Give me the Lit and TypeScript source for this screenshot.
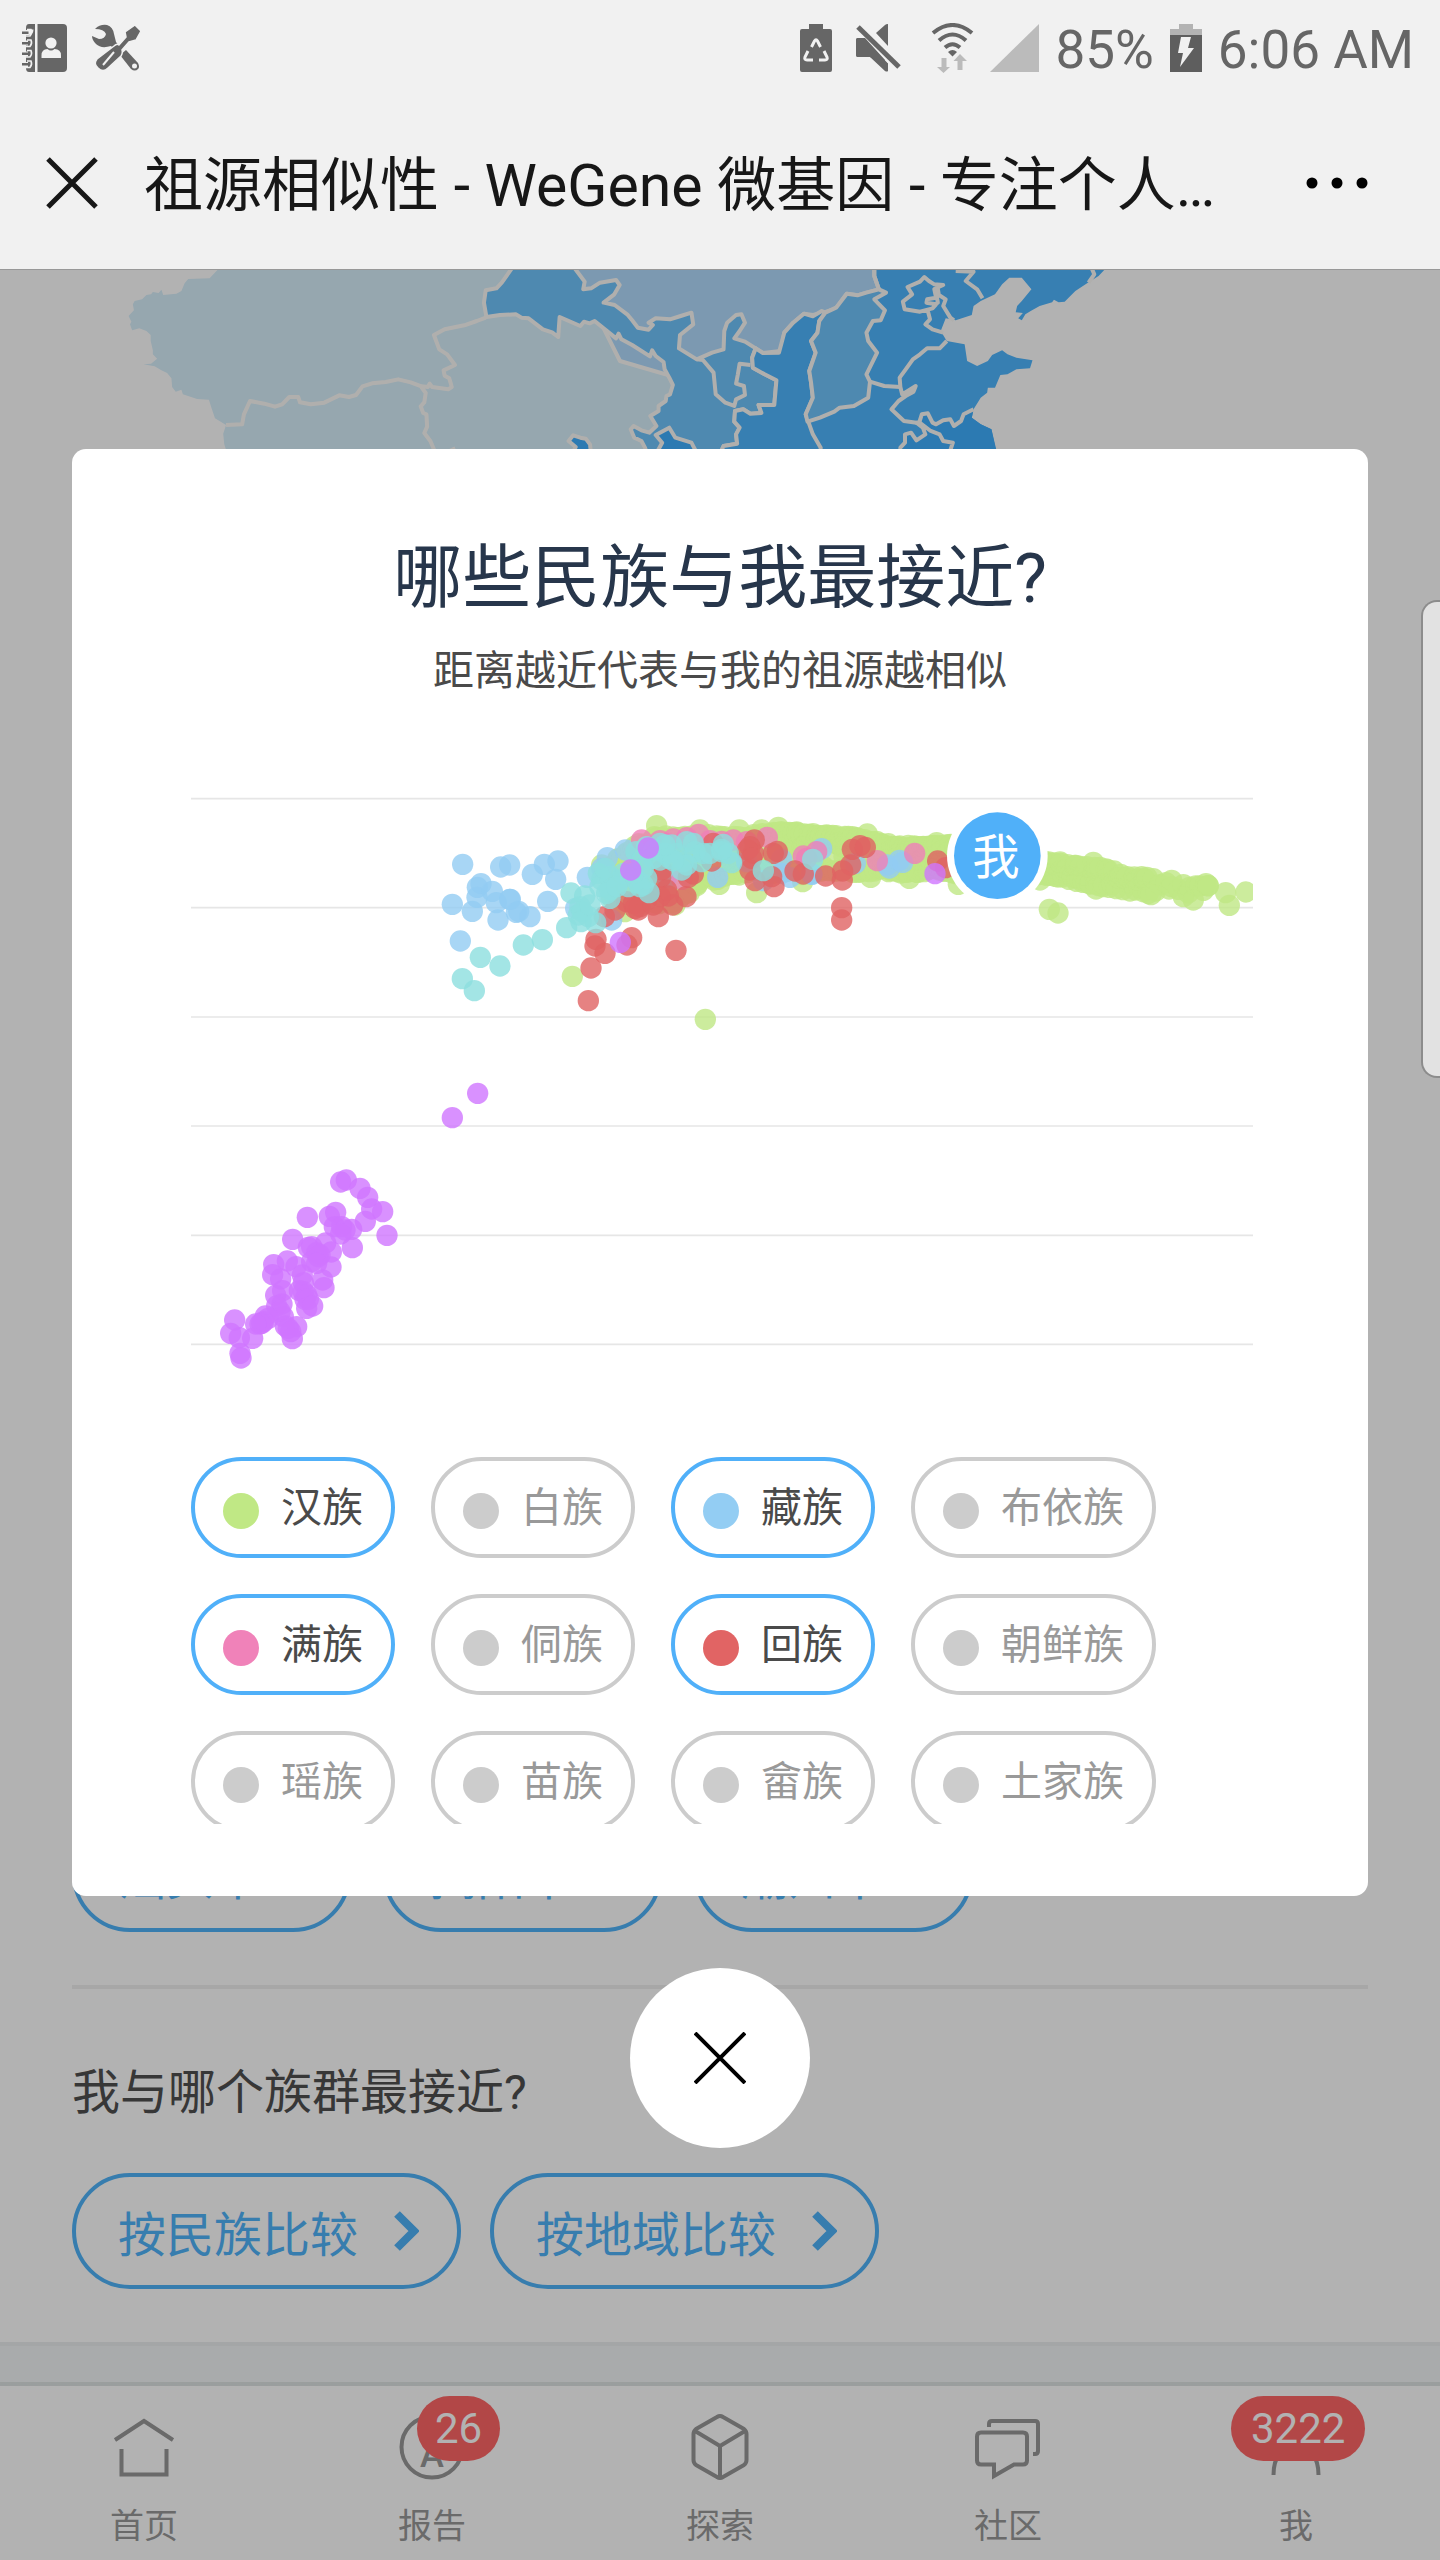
import { LitElement, html, svg, css } from "lit";
import { customElement, state } from "lit/decorators.js";
import { classMap } from "lit/directives/class-map.js";

type Point = [number, number];
interface Cluster {
  origin: Point;
  points: Point[];
}
interface Series {
  color: string;
  clusters: Cluster[];
}
interface Group {
  name: string;
  color: string;
  active: boolean;
}

/* Cluster origins inside the 3186 x 1860 plot area. */
const LEFT: Point = [687, 90];
const RIGHT: Point = [1827, 90];
const LOW: Point = [-33, 900];

/* x, upper y and lower y of the dense Han band. */
const BAND: [number, number, number][] = [
  [570, 230, 330], [620, 180, 350], [700, 138, 345], [780, 134, 335], [840, 132, 280],
  [930, 140, 260], [1000, 134, 250], [1060, 124, 250], [1140, 124, 255], [1260, 136, 248],
  [1310, 138, 248], [1390, 158, 244], [1460, 170, 254], [1540, 162, 242], [1590, 162, 250],
  [1700, 190, 262], [1800, 197, 255], [1900, 218, 258], [2000, 228, 282], [2060, 234, 292],
  [2120, 256, 302], [2190, 262, 313], [2230, 276, 296], [2330, 288, 315], [2370, 284, 292],
];

function bandPoints(): Point[] {
  const out: Point[] = [];
  let seed = 17;
  const rand = () => {
    seed = (seed * 16807) % 2147483647;
    return seed / 2147483647;
  };
  for (let i = 0; i < BAND.length - 1; i++) {
    const [x0, t0, b0] = BAND[i];
    const [x1, t1, b1] = BAND[i + 1];
    const n = Math.round((x1 - x0) / (x0 < 1900 ? 3 : x0 < 2190 ? 5 : 12));
    for (let k = 0; k < n; k++) {
      const f = (k + rand()) / n;
      const top = t0 + (t1 - t0) * f;
      const bottom = b0 + (b1 - b0) * f;
      const v = k % 4 === 0 ? rand() * 0.08 : k % 4 === 1 ? 1 - rand() * 0.12 : rand();
      out.push([Math.round(x0 + (x1 - x0) * f), Math.round(top + (bottom - top) * v)]);
    }
  }
  return out;
}

const SERIES: Series[] = [
  {
    color: "#bfe784",
    clusters: [
      { origin: LEFT, points: bandPoints() },
      {
        origin: LEFT,
        points: [
          [710, 107], [958, 120], [1025, 120], [1075, 112], [840, 120], [545, 225], [457, 559], [856, 688],
          [615, 365], [1010, 308], [898, 283], [830, 287], [1148, 275], [765, 345],
        ],
      },
      {
        origin: RIGHT,
        points: [
          [202, 132], [325, 166], [410, 158], [212, 262], [328, 265], [475, 283], [720, 270], [748, 358],
          [774, 369], [780, 216], [828, 226], [880, 217], [888, 297], [1053, 314], [1115, 271], [1180, 330],
          [1218, 281], [1225, 287], [1277, 308], [1288, 346], [1338, 306], [1150, 320],
        ],
      },
    ],
  },
  {
    color: "#92ccf3",
    clusters: [
      {
        origin: LEFT,
        points: [
          [128, 223], [242, 231], [269, 225], [337, 253], [373, 223], [414, 213], [407, 268], [183, 281],
          [172, 292], [171, 322], [217, 304], [229, 338], [269, 328], [271, 328], [157, 364], [97, 343],
          [234, 390], [296, 364], [289, 367], [330, 380], [383, 334], [121, 453], [502, 262], [562, 203],
          [545, 235], [616, 180], [467, 355], [575, 390], [893, 262], [1205, 176], [1085, 208], [1085, 250],
          [1110, 262], [1030, 272], [1175, 252], [740, 262], [980, 215],
        ],
      },
      { origin: RIGHT, points: [[262, 225], [268, 234], [298, 211], [308, 217], [166, 220], [36, 253]] },
    ],
  },
  {
    color: "#ef80b8",
    clusters: [
      {
        origin: LEFT,
        points: [
          [665, 150], [720, 152], [760, 147], [800, 143], [836, 133], [740, 160], [870, 152], [905, 154],
          [940, 150], [980, 155], [1042, 142], [785, 268], [1150, 198], [1160, 205], [1190, 185],
        ],
      },
      { origin: RIGHT, points: [[232, 212], [344, 190]] },
    ],
  },
  {
    color: "#e06363",
    clusters: [
      {
        origin: LEFT,
        points: [
          [1003, 150], [990, 170], [1000, 190], [982, 180], [995, 205], [1060, 190], [1072, 184], [990, 240],
          [1005, 272], [1055, 260], [1062, 290], [1125, 243], [1150, 252], [1217, 258], [880, 160], [875, 213],
          [820, 252], [805, 262], [798, 320], [725, 240], [722, 262], [740, 300], [758, 345], [745, 318],
          [715, 380], [720, 320], [690, 310], [680, 330], [655, 360], [640, 340], [620, 335], [660, 350],
          [645, 355], [585, 360], [553, 380], [528, 448], [525, 468], [555, 490], [513, 534], [505, 632],
          [621, 465], [635, 443], [768, 481], [700, 345],
        ],
      },
      {
        origin: RIGHT,
        points: [
          [157, 178], [180, 167], [196, 172], [152, 225], [128, 243], [127, 270], [125, 353],
          [125, 390], [413, 213], [437, 233],
        ],
      },
    ],
  },
  {
    color: "#8cdfde",
    clusters: [
      {
        origin: LEFT,
        points: [
          [181, 502], [240, 528], [310, 465], [367, 449], [127, 566], [163, 602], [440, 413], [453, 309],
          [494, 318], [480, 350], [475, 375], [487, 365], [505, 380], [483, 395], [527, 398], [510, 345],
          [535, 250], [545, 270], [540, 290], [570, 260], [570, 300], [570, 325], [560, 310], [600, 270],
          [610, 250], [625, 290], [650, 270], [680, 265], [670, 285], [687, 308], [660, 290], [648, 185],
          [680, 170], [720, 160], [700, 180], [735, 190], [720, 210], [755, 165], [750, 205], [770, 190],
          [790, 215], [785, 240], [800, 155], [820, 160], [825, 185], [845, 215], [850, 190], [870, 190],
          [905, 185], [910, 163], [925, 190], [935, 218], [905, 178], [700, 205], [665, 210], [670, 235],
          [1030, 242], [1178, 208], [590, 290], [640, 250], [555, 235], [800, 225], [760, 212], [735, 165],
        ],
      },
    ],
  },
  {
    color: "#cf75ff",
    clusters: [
      { origin: LEFT, points: [[685, 174], [632, 240], [601, 457]] },
      { origin: RIGHT, points: [[405, 251]] },
      {
        origin: LOW,
        points: [
          [893, 100], [817, 173], [482, 366], [499, 360], [540, 385], [563, 412], [575, 447], [608, 455],
          [556, 484], [621, 526], [467, 457], [448, 469], [382, 472], [463, 500], [485, 500], [495, 510],
          [515, 508], [482, 522], [517, 563], [338, 538], [437, 549], [454, 576], [385, 562], [395, 560],
          [410, 578], [415, 590], [420, 585], [395, 605], [410, 610], [453, 621], [322, 603], [281, 614],
          [278, 644], [302, 657], [348, 620], [367, 645], [370, 668], [428, 660], [432, 683], [358, 692],
          [370, 695], [380, 705], [375, 718], [385, 718], [380, 745], [398, 738], [308, 692], [287, 706],
          [306, 732], [290, 738], [300, 755], [310, 770], [256, 768], [265, 775], [250, 785], [245, 790],
          [240, 792], [227, 792], [218, 835], [164, 780], [152, 820], [178, 833], [180, 880], [183, 894],
          [316, 798], [350, 800], [325, 805], [332, 815], [337, 836],
        ],
      },
    ],
  },
];

const GRID_LINES = [116, 443, 771, 1098, 1426, 1753];

@customElement("status-bar")
export class StatusBar extends LitElement {
  static styles = css`
    :host {
      display: flex;
      align-items: center;
      justify-content: space-between;
      height: 96px;
      padding: 0 26px 0 22px;
      color: #666;
      font-family: Roboto, "Liberation Sans", sans-serif;
      font-size: 53px;
      line-height: 60px;
      white-space: nowrap;
    }
    .group {
      display: flex;
      align-items: center;
      gap: 16px;
    }
    .apps {
      gap: 25px;
    }
    .group span {
      padding-top: 4px;
    }
    svg {
      display: block;
      fill: currentColor;
    }
  `;

  render() {
    return html`
      <div class="group apps">
        <svg width="45" height="50" viewBox="0 0 45 50">
          <path d="M7 1h6v48H7q-3 0-3-4V5q0-4 3-4z" />
          <path d="M15.500 1H41q4 0 4 4v40q0 4-4 4H15.500z" />
          <g fill="none" stroke="#f1f1f1" stroke-width="5">
            <path d="M0 9.500h6q3 0 3-3M0 20h6M0 31h6M0 41.500h6" />
          </g>
          <g fill="none" stroke="#f1f1f1" stroke-width="1.600">
            <path d="M5 6.500h4q1.500 3.500-1 6.500h-4M5 17h4q1.500 3.500-1 6.500h-4M5 27.500h4q1.500 3.500-1 6.500h-4M5 38h4q1.500 3.500-1 6.500h-4" />
          </g>
          <path d="M0 8.500h6.500v2.500H0zM0 19h6.500v2.500H0zM0 29.500h6.500v2.500H0zM0 40h6.500v2.500H0z" />
          <ellipse cx="29" cy="20" rx="5.600" ry="5.600" fill="#f1f1f1" />
          <path d="M19.500 35v-2.500q0-6.500 6-6.500 3.500 3 7 0 6.500 0 6.500 6.500V35z" fill="#f1f1f1" />
        </svg>
        <svg width="50" height="48" viewBox="0 0 50 48">
          <path d="M3 5Q8 0 15 1q6 2 7 9l2 8 3 4-4 4-4-4q-10 3-15-2-4-4-4-8l7 3q6 0 7-5-2-5-11-5z" />
          <path d="M28 31l6-5 12 13q2 4 0 6-3 3-7 0z" />
          <circle cx="42.500" cy="42" r="2.500" fill="#f1f1f1" />
          <path d="M43 1l6 6-5 9-7 2-7 8q1 3-1 6L16 44q-5 5-10 0-5-4-1-9L22 22q3-3 5-1l7-8-1-5z" stroke="#f1f1f1" stroke-width="1.500" />
          <path d="M11 41L22 28" stroke="#f1f1f1" stroke-width="2" fill="none" />
        </svg>
      </div>
      <div class="group">
        <svg width="40" height="48" viewBox="0 0 40 48">
          <path d="M9 0h14v5h7q2 0 2 2v39q0 2-2 2H2q-2 0-2-2V7q0-2 2-2h7z" />
          <g fill="none" stroke="#f1f1f1" stroke-width="3">
            <path d="M11.500 23l3-6q1.500-2.500 3 0l3 6M24 27l3 6q1 3-2 3h-6M13 36H7q-3 0-2-3l3-6" />
          </g>
          <path d="M16 21l7 6h-4l5 5h-6v5h-4v-5H8l5-5H9z" />
        </svg>
        <svg width="59" height="48" viewBox="0 0 59 48">
          <path d="M32 0v22L20 9 29 1q1-1 3-1z" />
          <path d="M2 14h7l23 25v8q-1 1-3 0L14 33H2q-2 0-2-2V16q0-2 2-2z" />
          <path d="M2 3L42 43" stroke="#f1f1f1" stroke-width="9" />
          <path d="M2 14h7l20 22v4L14 33H2q-2 0-2-2V16q0-2 2-2z" />
          <path d="M2 3L43 43" stroke="currentColor" stroke-width="5" />
        </svg>
        <svg width="43" height="50" viewBox="0 0 43 50">
          <g fill="none" stroke="currentColor" stroke-width="4">
            <path d="M2 10q19.500-16 39 0M8 17.500q13.500-12 27 0M14 24.500q7.500-6.500 15 0" />
          </g>
          <path d="M17 29q4.500-4 9 0l-4.500 4.500z" />
          <path d="M10.500 35h5v9h3.500l-6.500 6-6.500-6h4.500zM26.500 47h5v-9h4.500l-7-7-6.500 7h4z" fill="#bbb" />
        </svg>
        <svg width="49" height="48" viewBox="0 0 49 48"><path d="M49 0v48H0z" fill="#bbb" /></svg>
        <span>85%</span>
        <svg width="32" height="48" viewBox="0 0 32 48">
          <path d="M9 0h14v5h9v6H0V5h9z" fill="#b3b3b3" />
          <path d="M0 11h32v37H0z" fill="#5e5e5e" />
          <path d="M11 13h10l-3 11h6L10 43l3-14H8z" fill="#f1f1f1" />
        </svg>
        <span>6:06 AM</span>
      </div>
    `;
  }
}

@customElement("china-map")
export class ChinaMap extends LitElement {
  static styles = css`
    :host {
      display: block;
    }
    svg {
      display: block;
      width: 100%;
    }
    path {
      stroke: #fdfbf8;
      stroke-width: 4px;
      stroke-linejoin: round;
      vector-effect: non-scaling-stroke;
    }
    .line {
      fill: none;
    }
    .coast {
      stroke: none;
    }
    .pale {
      fill: #d7effb;
    }
    .soft {
      fill: #b2dcfe;
    }
    .mid {
      fill: #70c4fd;
    }
    .strong {
      fill: #4fb7ff;
    }
    .deep {
      fill: #40afff;
    }
  `;

  render() {
    return html`
      <svg viewBox="0 0 1440 184" role="img" aria-label="祖源分布地图">
        <g transform="translate(100 -9) scale(0.35714 0.33333)">
          <path class="coast pale" d="M335 20L307 52 247 54 237 67 228 90 214 98 177 102 172 86 164 96 148 93 143 100 130 102 118 115 97 120 92 130 95 148 80 165 88 182 84 190 90 208 110 202 130 210 142 222 142 240 148 268 148 280 160 293 143 308 122 310 153 316 172 328 188 336 200 352 202 378 212 392 228 386 232 400 272 414 305 416 312 440 322 472 353 492 345 518 348 550 360 590H1620V20z" />
          <path class="line" d="M1080 170L1055 180 1020 193 965 205 935 222 950 265 972 280 994 312 962 328 965 344 978 352 985 378 975 385 930 378 923 368 918 378 900 376 870 364 835 355 800 363 762 367 735 376 717 402 697 408 670 403 628 425 590 430 560 424 555 408 530 408 510 430 490 437 460 428 420 420 403 460 398 490 353 492" />
          <path class="line" d="M900 378L912 396 908 424 898 436 905 456 914 460 916 497 908 516 925 540 945 590M970 575L995 562" />
          <path class="deep" d="M1312 540L1325 523 1345 530 1360 533 1372 550 1376 590H1315L1332 558z" />
        </g>
        <g transform="translate(620 -9) scale(0.35714 0.33333)">
          <path class="coast strong" d="M700 20H1362L1340 45 1310 65 1275 90 1245 122 1228 124 1215 116 1210 124 1175 135 1150 150 1135 160 1125 178 1115 172 1128 156 1108 154 1112 135 1125 120 1152 85 1125 50 1090 50 1070 70 1050 100 1010 120 990 135 985 162 940 178 912 172 898 210 915 240 965 250 972 300 1000 315 1030 300 1042 282 1070 268 1085 280 1110 290 1155 298 1148 322 1110 325 1085 340 1065 342 1050 380 1030 380 1028 395 1010 410 990 445 985 470 1010 490 1040 505 1057 590H200V200L565 150z" />
          <path class="soft" d="M-140 0H712V45L725 85 690 95 665 103 635 98 605 142 570 155 540 162 515 158 485 185 460 215 450 270 400 276 380 262 320 400 0 300z" />
          <path class="mid" d="M-295 10L-331 65-346 82-376 88-381 125-374 168-336 162-291 160-276 170-256 172-216 205-190 214-173 228-169 168-111 195-101 182-85 187-71 180-11 232-4 218 4 235 34 252 84 286 90 268 100 285 122 303 125 325 138 350 148 372 140 400 130 405 128 420 108 435 108 450 85 465 102 495 82 515 60 508 38 495 30 505 40 530 60 540 70 560 80 590H275L290 555 328 548 325 520 335 500 320 482 322 450 345 445 365 458 396 456 388 432 432 432 438 358 405 340 372 320 370 290 380 262 350 242 320 232 335 210 350 185 340 160 325 162 300 185 292 210 290 265 258 275 215 295 165 262 168 222 205 190 200 155 170 165 140 175 100 172 80 185 92 192 80 206 50 200 34 178 20 160-15 132-46 125-16 100-1 72-11 57-56 65-81 82-103 85-99 62-135 10z" />
          <path class="line" d="M215 295L232 297 262 335 268 400 295 425 320 435 325 415 350 402 347 375 325 368 330 340 335 308 365 312" />
          <path class="strong" d="M575 155L558 180 553 215 535 240 548 275 530 330 535 365 540 410 520 460 540 520 562 560 560 590H275L290 555 328 548 325 520 335 500 320 482 322 450 345 445 365 458 396 456 388 432 432 432 438 358 405 340 372 320 370 290 380 262 400 276 445 275 460 215 485 185 515 158 540 166 565 150z" />
          <path class="mid" d="M575 155L605 140 635 98 665 103 690 95 725 85 745 95 712 115 742 148 730 178 708 180 690 215 695 240 720 275 690 340 700 362 695 410 655 435 615 440 600 452 560 470 525 482 520 460 540 410 535 365 530 330 548 275 535 240 553 215 558 180z" />
          <path class="line" d="M700 362L740 375 785 378M712 20V45L725 85" />
          <path class="line" d="M852 48L840 62 805 78 818 100 792 122 797 145 840 152 875 142 885 130 858 125 860 115 885 110 880 84 905 72 880 70 865 60zM885 95L890 125 876 135M890 84L893 102 912 115 905 135 925 170 935 178M862 150L868 175 855 190 875 205 905 215" />
          <path class="line" d="M940 30L990 32 968 60 1000 85 1015 112M1320 20L1328 40 1312 65" />
          <path class="line" d="M915 240L895 262 860 262 840 280 820 295 800 325 783 350 785 378 790 400 828 375 822 392 800 405 780 420 760 445 795 480 830 485" />
          <path class="coast deep" d="M838 484L845 460 862 457 875 485 885 490 905 478 925 475 935 495 955 480 962 460 990 445 985 470 1010 490 1040 505 1059 590H918L932 545 905 540 900 520 860 505z" />
          <path class="line" d="M838 484L845 460 862 457 875 485 885 490 905 478 925 475 935 495 955 480 962 460 990 445" />
          <path class="deep" d="M830 485L848 500 855 520 830 538 815 515 798 520 798 545 785 560V590H918L932 545 905 540 895 520 870 510 838 484z" />
          <path class="deep" d="M95 590L118 545 100 522 138 500 155 530 200 545 222 590z" />
        </g>
      </svg>
    `;
  }
}

@customElement("report-page")
export class ReportPage extends LitElement {
  static styles = css`
    :host {
      flex: 1;
      display: flex;
      flex-direction: column;
      justify-content: space-between;
      background: #fff;
      color: #505050;
      font-size: 48px;
      line-height: 72px;
      border-top: 1px solid #dadada;
    }
    .content {
      padding: 0 72px;
    }
    .row {
      display: flex;
      gap: 29px;
    }
    .cities {
      gap: 32px;
      padding-bottom: 53px;
      border-bottom: 4px solid #f0f0f0;
    }
    .pill {
      display: flex;
      align-items: center;
      height: 116px;
      padding: 0 38px 0 42px;
      gap: 36px;
      border: 4px solid #50b3fa;
      border-radius: 58px;
      background: none;
      color: #50b3fa;
      font: inherit;
      white-space: nowrap;
    }
    .city {
      gap: 20px;
      padding-right: 40px;
    }
    .pill span {
      padding-top: 10px;
    }
    .pill svg {
      display: block;
      fill: none;
      stroke: currentColor;
      stroke-width: 8;
    }
    h2 {
      margin: 0;
      padding: 68px 0 44px;
      font-size: 48px;
      font-weight: 400;
      line-height: 72px;
    }
    .band {
      height: 36px;
      margin-top: 53px;
      border-top: 4px solid #ebeef0;
      background: #f3f5f7;
    }
  `;

  private pill(text: string, extra = "") {
    return html`<button class="pill ${extra}" type="button">
      <span>${text}</span>
      <svg width="25" height="40" viewBox="0 0 25 40"><path d="M3 3L20 20 3 37" /></svg>
    </button>`;
  }

  render() {
    return html`
      <china-map></china-map>
      <div>
        <div class="content">
          <div class="row cities">
            ${["汕头市", "揭阳市", "潮州市"].map((city) => this.pill(city, "city"))}
          </div>
          <h2>我与哪个族群最接近?</h2>
          <div class="row">${this.pill("按民族比较")}${this.pill("按地域比较")}</div>
        </div>
        <div class="band"></div>
      </div>
    `;
  }
}

@customElement("tab-bar")
export class TabBar extends LitElement {
  static styles = css`
    :host {
      display: flex;
      height: 174px;
      border-top: 4px solid #dde2e2;
      background: #fff;
    }
    .tab {
      position: relative;
      flex: 1;
      display: flex;
      flex-direction: column;
      align-items: center;
      gap: 20px;
      padding-top: 26px;
      color: #989898;
      font-size: 34px;
      line-height: 48px;
      text-decoration: none;
    }
    svg {
      display: block;
      fill: none;
      stroke: currentColor;
      stroke-width: 4;
    }
    .letter {
      fill: currentColor;
      stroke: none;
      font: 500 36px Roboto, "Liberation Sans", sans-serif;
    }
    .badge {
      position: absolute;
      top: 10px;
      left: calc(50% - 15px);
      padding: 0 18px;
      border-radius: 33px;
      background: #ff6666;
      color: #fff;
      font-size: 42px;
      line-height: 65px;
    }
    .wide {
      left: calc(50% - 65px);
      padding: 0 20px;
    }
  `;

  render() {
    const tabs = [
      { label: "首页", icon: svg`<path d="M7 28L36 9 65 28M13.500 37V62.500H58.500V37" />` },
      {
        label: "报告",
        icon: svg`<circle cx="36" cy="35" r="30.500" /><text class="letter" x="36" y="55" text-anchor="middle">A</text>`,
        badge: "26",
      },
      {
        label: "探索",
        icon: svg`<path stroke-linejoin="round" d="M33 5Q36 3 39 5L60 17Q62.500 19 62.500 22V48Q62.500 51 60 53L39 65Q36 67 33 65L12 53Q9.500 51 9.500 48V22Q9.500 19 12 17zM11 19L36 34 61 19M36 34V66" />`,
      },
      {
        label: "社区",
        icon: svg`<path d="M17 15V12Q17 9 20 9H63Q66 9 66 12V39Q66 42 63 42H61M9 20.500H51Q55 20.500 55 24.500V48.500Q55 52.500 51 52.500H42L22 64V52.500H9Q5 52.500 5 48.500V24.500Q5 20.500 9 20.500z" />`,
      },
      {
        label: "我",
        icon: svg`<circle cx="36" cy="20" r="14" /><path d="M13.500 63Q13.500 36 36 36T58.500 63" />`,
        badge: "3222",
        wide: true,
      },
    ];
    return tabs.map(
      (tab) => html`<a class="tab" href="#">
        <svg width="72" height="70" viewBox="0 0 72 70" aria-hidden="true">${tab.icon}</svg>
        <span>${tab.label}</span>
        ${tab.badge
          ? html`<span class=${classMap({ badge: true, wide: !!tab.wide })}>${tab.badge}</span>`
          : null}
      </a>`,
    );
  }
}

@customElement("similarity-chart")
export class SimilarityChart extends LitElement {
  static styles = css`
    :host {
      display: block;
    }
    svg {
      display: block;
      width: 100%;
    }
    .grid {
      stroke: #e6e6e6;
      stroke-width: 5px;
    }
    .dots {
      fill-opacity: 0.8;
    }
    .halo {
      fill: #fff;
    }
    .me {
      fill: #50b0f9;
    }
    .me-label {
      fill: #fff;
      font-size: 142px;
      text-anchor: middle;
    }
  `;

  render() {
    return html`
      <svg viewBox="0 0 3186 1860" role="img" aria-label="民族祖源散点图">
        ${GRID_LINES.map((y) => svg`<line class="grid" x1="0" x2="3186" y1=${y} y2=${y} />`)}
        ${SERIES.map(
          (series) => svg`<g class="dots" fill=${series.color}>
            ${series.clusters.map((c) =>
              c.points.map(([x, y]) => svg`<circle cx=${x + c.origin[0]} cy=${y + c.origin[1]} r="32" />`),
            )}
          </g>`,
        )}
        <circle class="halo" cx="2419" cy="287" r="151" />
        <circle class="me" cx="2419" cy="287" r="130" />
        <text class="me-label" x="2415" y="342">我</text>
      </svg>
    `;
  }
}

@customElement("similarity-dialog")
export class SimilarityDialog extends LitElement {
  static styles = css`
    :host {
      display: flex;
      flex-direction: column;
      align-items: center;
      padding: 180px 72px 0;
    }
    .card {
      box-sizing: border-box;
      width: 100%;
      padding: 82px 0 72px;
      border-radius: 14px;
      background: #fff;
    }
    h1 {
      margin: 0 0 16px;
      color: #27364b;
      font-size: 69px;
      font-weight: 400;
      line-height: 96px;
      text-align: center;
    }
    .hint {
      margin: 0 0 61px;
      color: #4a4a4a;
      font-size: 41px;
      line-height: 56px;
      text-align: center;
    }
    .body {
      padding: 0 115px 0 119px;
    }
    .legend {
      display: grid;
      grid-template-columns: repeat(4, max-content);
      gap: 36px;
      height: 367px;
      margin-top: 77px;
      overflow: hidden;
    }
    .chip {
      display: flex;
      align-items: center;
      gap: 22px;
      height: 101px;
      padding: 0 28px;
      border: 4px solid #ccc;
      border-radius: 51px;
      background: #fff;
      color: #999;
      font: inherit;
      font-size: 41px;
      line-height: 56px;
      white-space: nowrap;
    }
    .chip.active {
      border-color: #50b0f9;
      color: #4a4a4a;
    }
    .dot {
      width: 36px;
      height: 36px;
      margin-top: 6px;
      border-radius: 50%;
      background: #ccc;
    }
    .close {
      display: flex;
      align-items: center;
      justify-content: center;
      width: 180px;
      height: 180px;
      margin-top: 72px;
      padding: 0;
      border: 0;
      border-radius: 50%;
      background: #fff;
    }
  `;

  @state() private groups: Group[] = [
    { name: "汉族", color: "#c0e885", active: true },
    { name: "白族", color: "#ccc", active: false },
    { name: "藏族", color: "#93cdf3", active: true },
    { name: "布依族", color: "#ccc", active: false },
    { name: "满族", color: "#f082b9", active: true },
    { name: "侗族", color: "#ccc", active: false },
    { name: "回族", color: "#e16464", active: true },
    { name: "朝鲜族", color: "#ccc", active: false },
    { name: "瑶族", color: "#ccc", active: false },
    { name: "苗族", color: "#ccc", active: false },
    { name: "畲族", color: "#ccc", active: false },
    { name: "土家族", color: "#ccc", active: false },
  ];

  private toggle(index: number) {
    this.groups = this.groups.map((g, i) => (i === index ? { ...g, active: !g.active } : g));
  }

  render() {
    return html`
      <section class="card">
        <h1>哪些民族与我最接近?</h1>
        <p class="hint">距离越近代表与我的祖源越相似</p>
        <div class="body">
          <similarity-chart></similarity-chart>
          <div class="legend">
            ${this.groups.map(
              (g, i) => html`<button
                type="button"
                class=${classMap({ chip: true, active: g.active })}
                aria-pressed=${g.active ? "true" : "false"}
                @click=${() => this.toggle(i)}
              >
                <span class="dot" style="background:${g.color}"></span><span>${g.name}</span>
              </button>`,
            )}
          </div>
        </div>
      </section>
      <button class="close" type="button" aria-label="关闭">
        <svg width="52" height="52" viewBox="0 0 52 52" fill="none" stroke="#000" stroke-width="4">
          <path d="M1 1L51 51M51 1L1 51" />
        </svg>
      </button>
    `;
  }
}

@customElement("app-root")
export class AppRoot extends LitElement {
  static styles = css`
    :host {
      display: flex;
      flex-direction: column;
      min-height: 100vh;
      background: #f1f1f1;
      font-family: Roboto, "Noto Sans CJK SC", sans-serif;
    }
    .title-bar {
      display: flex;
      align-items: center;
      height: 173px;
      padding: 0 72px 0 46px;
      color: #171717;
    }
    .icon {
      display: block;
      padding: 0;
      border: 0;
      background: none;
    }
    .icon svg {
      display: block;
    }
    .title {
      flex: 1;
      margin: 0 0 0 46px;
      padding-top: 6px;
      font-size: 59px;
      font-weight: 400;
      line-height: 80px;
      white-space: nowrap;
    }
    .viewport {
      position: relative;
      flex: 1;
      display: flex;
      flex-direction: column;
    }
    .scrim {
      position: absolute;
      inset: 0;
      background: rgba(0, 0, 0, 0.3);
    }
    .edge-handle {
      position: absolute;
      top: 331px;
      right: 0;
      width: 17px;
      height: 474px;
      border: 2px solid #8c8c8c;
      border-right: 0;
      border-radius: 16px 0 0 16px;
      background: #e2e2e2;
    }
  `;

  render() {
    return html`
      <status-bar></status-bar>
      <header class="title-bar">
        <button class="icon" type="button" aria-label="返回">
          <svg width="52" height="52" viewBox="0 0 52 52" fill="none" stroke="#171717" stroke-width="5">
            <path d="M2 2L50 50M50 2L2 50" />
          </svg>
        </button>
        <h1 class="title">祖源相似性 - WeGene 微基因 - 专注个人…</h1>
        <button class="icon" type="button" aria-label="更多">
          <svg width="62" height="12" viewBox="0 0 62 12">
            <circle cx="6" cy="6" r="5.500" /><circle cx="31" cy="6" r="5.500" /><circle cx="56" cy="6" r="5.500" />
          </svg>
        </button>
      </header>
      <main class="viewport">
        <report-page></report-page>
        <tab-bar></tab-bar>
        <div class="scrim">
          <similarity-dialog role="dialog"></similarity-dialog>
          <div class="edge-handle"></div>
        </div>
      </main>
    `;
  }
}
